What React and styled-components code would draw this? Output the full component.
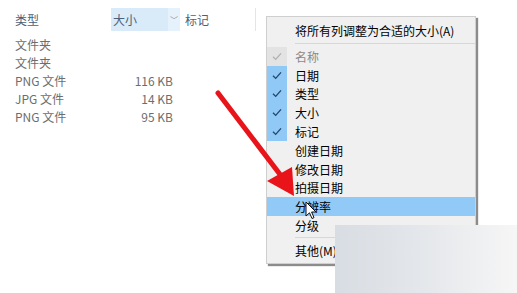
import React from "react";
import styled, { createGlobalStyle } from "styled-components";

const GlobalStyle = createGlobalStyle`
  html, body {
    margin: 0;
    padding: 0;
    background: #ffffff;
  }
  body {
    font-family: "Noto Sans CJK SC", "Noto Sans", sans-serif;
    font-size: 12px;
    overflow: hidden;
  }
`;

const Page = styled.div`
  position: relative;
  width: 517px;
  height: 293px;
  overflow: hidden;
  background: #fff;
`;

const FileList = styled.div`
  display: flex;
  flex-direction: column;
  padding-top: 8px;
  width: 260px;
`;

const Header = styled.div`
  display: flex;
  height: 23px;
  align-items: stretch;
  color: #4c607a;
`;

const HeadCell = styled.div`
  display: flex;
  align-items: center;
  width: ${props => props.w}px;
  padding-left: ${props => props.pl || 0}px;
  box-sizing: border-box;
  background: ${props => (props.active ? "#d9ebf9" : "transparent")};
  border-right: ${props => (props.divider ? "1px solid #e5e5e5" : "none")};
`;

const Chevron = styled.div`
  width: 12px;
  display: flex;
  align-items: center;
  justify-content: center;
  background: #e5f1fb;
  color: #7a8a9c;
  font-size: 8px;
`;

const Rows = styled.div`
  display: flex;
  flex-direction: column;
  padding-top: 4px;
`;

const Row = styled.div`
  display: flex;
  height: 18px;
  align-items: center;
  color: #6d6d6d;
`;

const TypeCell = styled.div`
  width: 96px;
  padding-left: 15px;
  box-sizing: border-box;
`;

const SizeCell = styled.div`
  width: 77px;
  text-align: right;
`;

const Menu = styled.div`
  position: absolute;
  left: 266px;
  top: 16px;
  width: 210px;
  padding: 2px 0 3px;
  box-sizing: border-box;
  background: #f0f0f0;
  border: 1px solid #cfcfcf;
  box-shadow: 2px 2px 1px rgba(0, 0, 0, 0.45);
  color: #000;
`;

const Item = styled.div`
  display: flex;
  align-items: center;
  height: ${props => (props.tall ? 22 : 18.8)}px;
  background: ${props => (props.hot ? "#91c9f7" : "transparent")};
`;

const CheckBox = styled.div`
  width: 20px;
  align-self: stretch;
  display: flex;
  align-items: center;
  justify-content: center;
  background: ${props =>
    props.state === "on" ? "#90c8f6" : props.state === "off" ? "#e3e3e3" : "transparent"};
  color: ${props => (props.state === "on" ? "#21466b" : "#a8a8a8")};
`;

const Label = styled.span`
  padding-left: 8px;
  color: ${props => (props.dim ? "#8a8a8a" : "#000")};
`;

const Separator = styled.div`
  height: 1px;
  margin: 2px 0 3px 28px;
  background: #d7d7d7;
`;

const Overlay = styled.svg`
  position: absolute;
  left: 0;
  top: 0;
  pointer-events: none;
`;

const Blur = styled.div`
  position: absolute;
  left: 335px;
  top: 225px;
  width: 182px;
  height: 68px;
  background: linear-gradient(90deg, #d8dde3 0%, #e3e6ea 45%, #f6f6f6 100%);
`;

const Check = ({ color }) => (
  <svg width="10" height="9" viewBox="0 0 10 9">
    <path d="M1 4.8 L3.7 7.4 L9 1.4" fill="none" stroke={color} strokeWidth="1.3" />
  </svg>
);

const files = [
  ["文件夹", ""],
  ["文件夹", ""],
  ["PNG 文件", "116 KB"],
  ["JPG 文件", "14 KB"],
  ["PNG 文件", "95 KB"]
];

const columns = [
  ["名称", "off"],
  ["日期", "on"],
  ["类型", "on"],
  ["大小", "on"],
  ["标记", "on"],
  ["创建日期"],
  ["修改日期"],
  ["拍摄日期"],
  ["分辨率", null, true],
  ["分级"]
];

export default function App() {
  return (
    <Page>
      <GlobalStyle />
      <FileList>
        <Header>
          <HeadCell w={111} pl={15}>类型</HeadCell>
          <HeadCell w={57} pl={2} active>大小</HeadCell>
          <Chevron>﹀</Chevron>
          <HeadCell w={76} pl={5} divider>标记</HeadCell>
        </Header>
        <Rows>
          {files.map(([type, size], i) => (
            <Row key={i}>
              <TypeCell>{type}</TypeCell>
              <SizeCell>{size}</SizeCell>
            </Row>
          ))}
        </Rows>
      </FileList>

      <Menu>
        <Item tall>
          <CheckBox />
          <Label>将所有列调整为合适的大小(A)</Label>
        </Item>
        <Separator />
        {columns.map(([name, state, hot]) => (
          <Item key={name} hot={hot}>
            <CheckBox state={state}>
              {state && <Check color={state === "on" ? "#21466b" : "#b0b0b0"} />}
            </CheckBox>
            <Label dim={state === "off"}>{name}</Label>
          </Item>
        ))}
        <Separator />
        <Item>
          <CheckBox />
          <Label>其他(M)...</Label>
        </Item>
      </Menu>

      <Blur />

      <Overlay width="517" height="293" viewBox="0 0 517 293">
        <line x1="218" y1="93" x2="282" y2="177" stroke="#e8141a" strokeWidth="5" strokeLinecap="round" />
        <polygon points="294,196 267,181 292,167" fill="#e8141a" />
        <path
          d="M306 202 L306 216 L309.5 212.8 L312 218.5 L314 217.6 L311.6 212 L316 212 Z"
          fill="#fff"
          stroke="#111"
          strokeWidth="1"
          strokeLinejoin="round"
        />
      </Overlay>
    </Page>
  );
}
